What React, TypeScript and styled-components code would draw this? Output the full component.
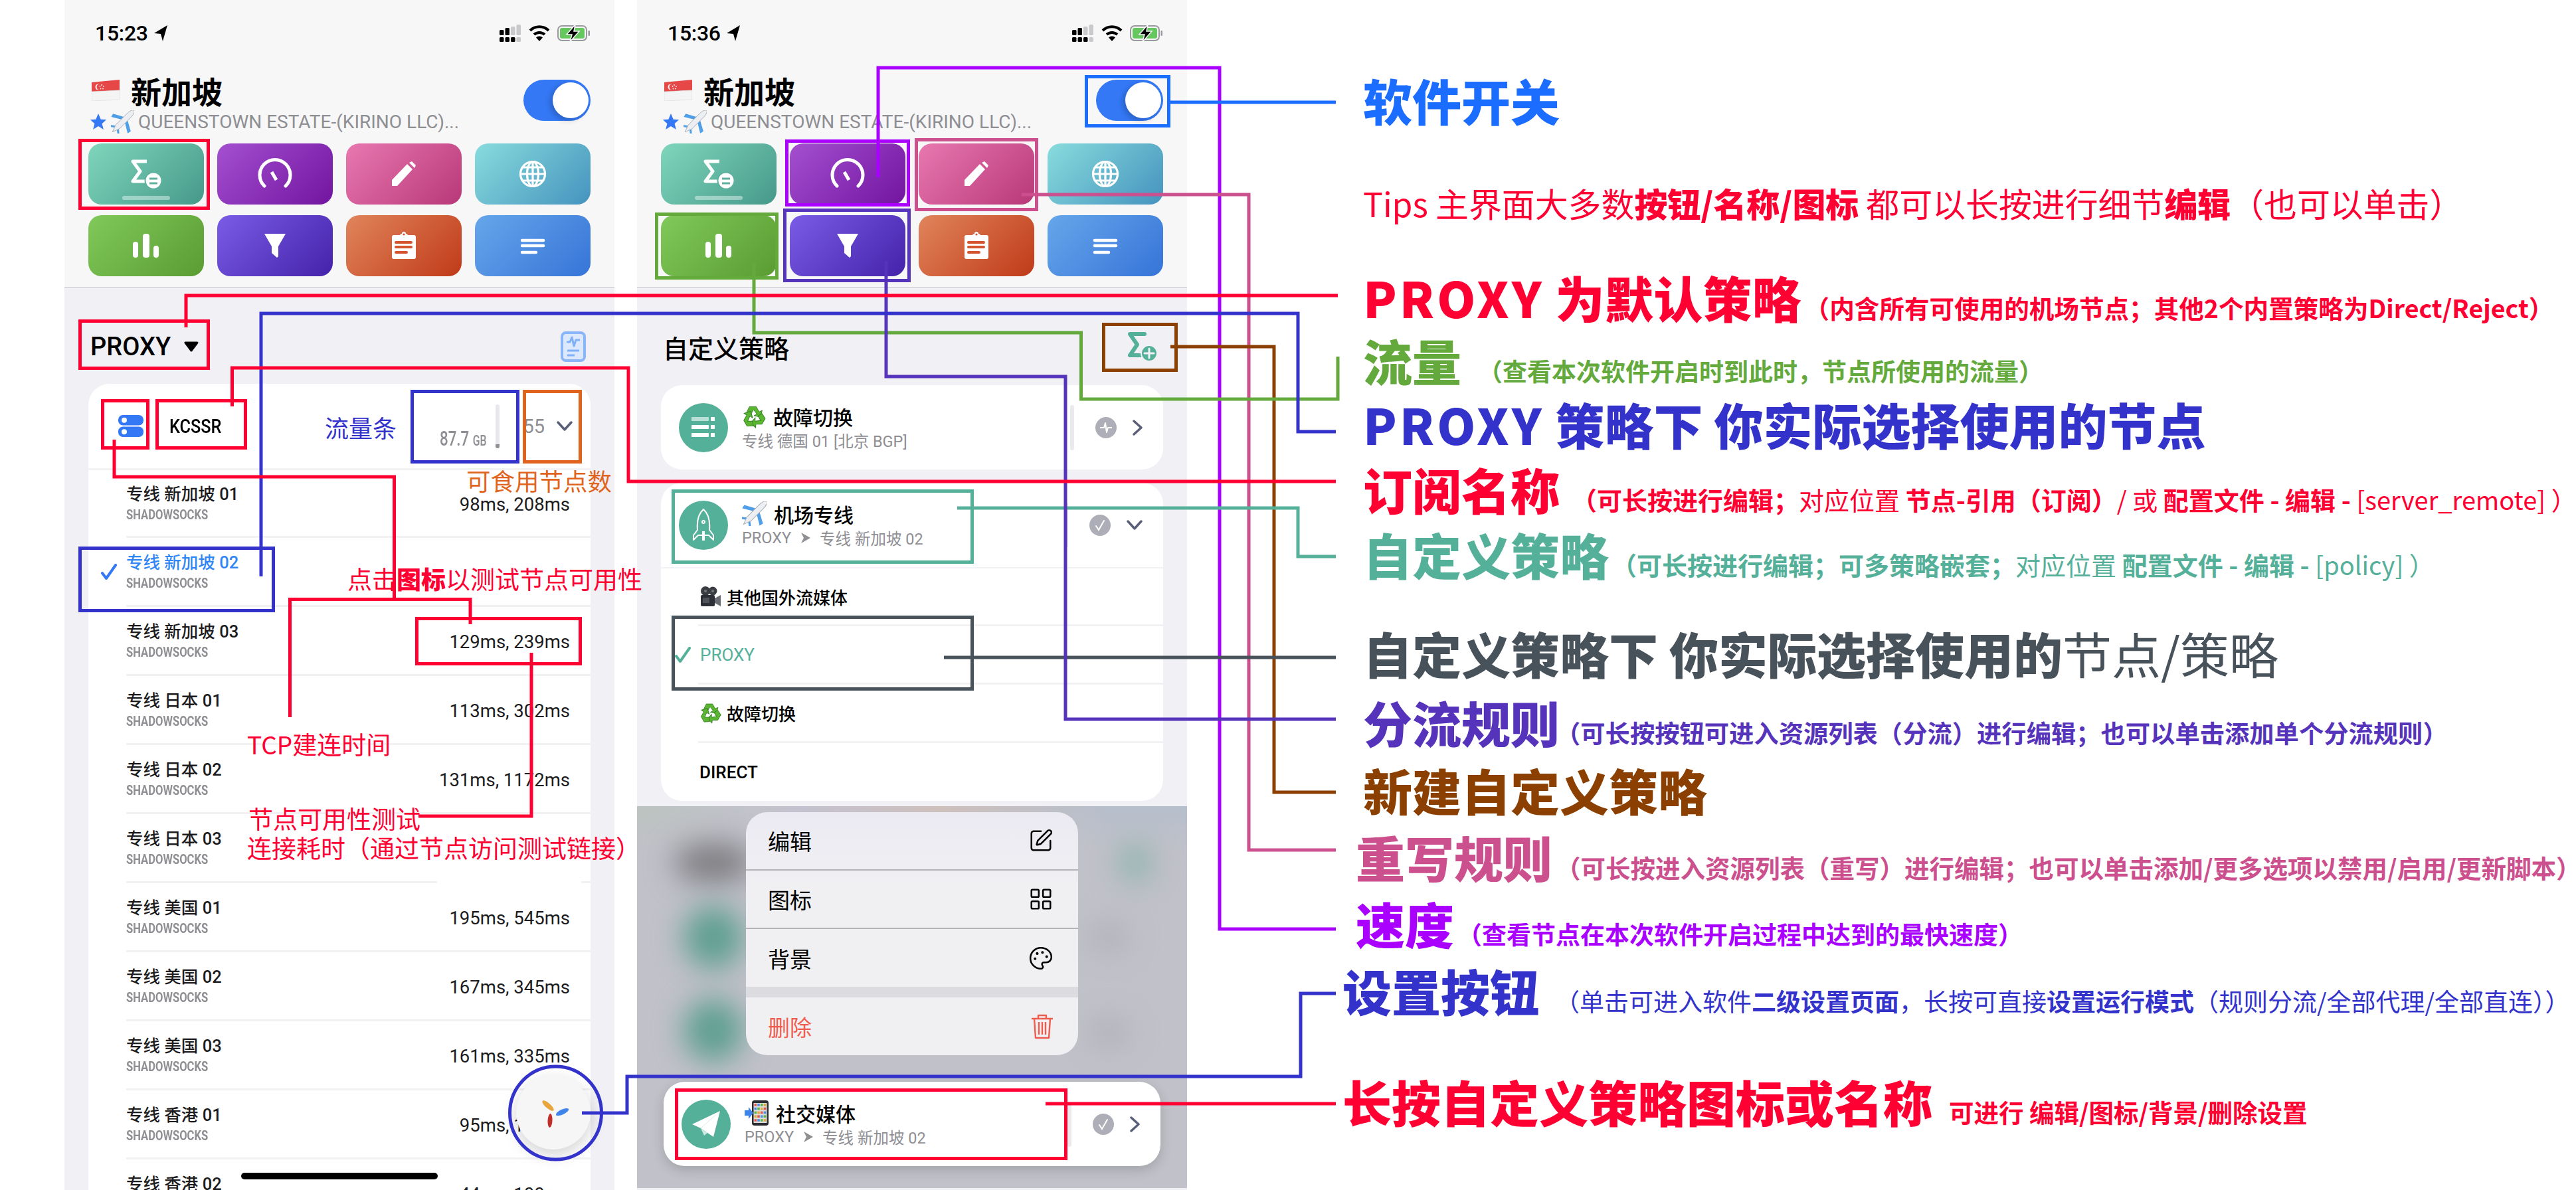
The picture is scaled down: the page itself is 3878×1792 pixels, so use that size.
import React from "react";
import styled, { createGlobalStyle } from "styled-components";
import { SquarePen, LayoutGrid, Palette } from "lucide-react";

const UI = `Roboto, "Noto Sans CJK SC", sans-serif`;
const NOTE = `"Noto Sans CJK SC", sans-serif`;
const TEAL = "#55b09a";

const Global = createGlobalStyle`
  html, body { margin: 0; padding: 0; background: #fff; }
  * { box-sizing: border-box; }
`;

const Canvas = styled.div`
  position: relative; width: 3878px; height: 1792px; overflow: hidden; background: #fff;
  display: flex; padding-left: 97px; gap: 34px; font-family: ${UI};
`;
const Phone = styled.div`
  position: relative; width: 828px; height: 1792px; flex: none; overflow: hidden;
  background: #f1f1f5; display: flex; flex-direction: column;
`;
const Header = styled.div`
  height: 433px; flex: none; background: #f7f7f8; border-bottom: 1px solid #c8c8cc;
  display: flex; flex-direction: column;
`;
const StatusBar = styled.div`
  height: 36px; margin-top: 32px; padding: 0 36px 0 46px; display: flex; align-items: center; justify-content: space-between;
`;
const Time = styled.div`
  display: flex; align-items: center; gap: 8px; font-size: 32px; font-weight: 500; color: #000; letter-spacing: -.3px;
`;
const StatusIcons = styled.div`display: flex; align-items: center; gap: 11px;`;
const TitleRow = styled.div`
  height: 96px; margin-top: 52px; padding: 0 36px 0 41px; display: flex; justify-content: space-between; flex: none;
`;
const TitleBlock = styled.div`display: flex; flex-direction: column;`;
const Title = styled.div`
  display: flex; align-items: center; gap: 17px; height: 32px; font-size: 46px; font-weight: 700; color: #000;
  font-family: ${NOTE}; line-height: 32px;
`;
const Subtitle = styled.div`
  display: flex; align-items: center; height: 30px; margin: 16px 0 0 -3px; font-size: 28px; color: #8e8e93; gap: 6px;
`;
const Toggle = styled.div`
  width: 101px; height: 62px; border-radius: 31px; background: #3478f6; padding: 4px 3px; display: flex; justify-content: flex-end;
`;
const Knob = styled.div`width: 54px; height: 54px; border-radius: 50%; background: #fff; box-shadow: -4px 3px 8px rgba(0,0,0,.2);`;
const TileGrid = styled.div`
  display: grid; grid-template-columns: repeat(4, 174px); grid-auto-rows: 92px; gap: 16px 20px; padding: 0 36px;
`;
const Tile = styled.div<{ $from: string; $to: string }>`
  border-radius: 20px; background: linear-gradient(135deg, ${p => p.$from}, ${p => p.$to});
  svg { display: block; width: 174px; height: 92px; }
`;
const SectionRow = styled.div<{ $h: number }>`
  height: ${p => p.$h}px; flex: none; padding: 32px 43px 0 39px; display: flex; align-items: center; justify-content: space-between;
`;
const ProxyName = styled.div`
  display: flex; align-items: center; gap: 20px; font-size: 38px; font-weight: 500; color: #000;
`;
const SectionTitle = styled.div`font-family: ${NOTE}; font-size: 38px; font-weight: 500; color: #000;`;

const NodeCard = styled.div`
  margin: 0 36px; background: #fff; border-radius: 32px 32px 0 0; flex: 1; display: flex; flex-direction: column;
`;
const NodeHead = styled.div`
  height: 130px; flex: none; padding: 0 27px 0 45px; border-bottom: 3px solid #f2f2f5; display: flex; align-items: center;
`;
const GroupName = styled.div`
  margin-left: 39px; font-size: 29px; font-weight: 500; color: #000; transform: scaleX(.87); transform-origin: left center;
`;
const Traffic = styled.div`margin-left: auto; display: flex; align-items: flex-end; gap: 16px; height: 66px;`;
const TrafficText = styled.div`
  color: #8e8e93; font-weight: 500; font-size: 31px; line-height: 23px; width: 68px; white-space: nowrap;
  transform: scaleX(.72); transform-origin: left bottom; small { font-size: 22px; }
`;
const TrafficBar = styled.div`
  width: 6px; height: 66px; border-radius: 3px; background: #e8e8ec; display: flex; align-items: flex-end; overflow: hidden;
  &::after { content: ""; width: 6px; height: 6px; background: #8e8e93; }
`;
const NodeCount = styled.div`margin: 0 18px 0 35px; font-size: 29px; color: #8e8e93;`;
const NodeRow = styled.div<{ $h: number }>`
  height: ${p => p.$h}px; flex: none; margin-left: 57px; padding-right: 31px; border-bottom: 3px solid #f2f2f5;
  display: flex; align-items: center;
`;
const CheckSlot = styled.div`width: 24px; height: 24px; margin: 0 14px 0 -38px; flex: none;`;
const NodeText = styled.div`display: flex; flex-direction: column; padding-top: 6px;`;
const NodeName = styled.div<{ $on?: boolean }>`
  font-size: 25.5px; line-height: 30px; font-weight: 500; color: ${p => (p.$on ? "#2f86f6" : "#1c1c1e")}; white-space: nowrap;
`;
const NodeProto = styled.div`
  font-size: 21px; line-height: 33px; font-weight: 700; color: #8e8e93; transform: scaleX(.79); transform-origin: left center;
`;
const Latency = styled.div`margin-left: auto; font-size: 27.5px; color: #1c1c1e; white-space: nowrap; padding-top: 3px;`;
const Fab = styled.div`
  position: absolute; left: 680px; top: 1619px; width: 112px; height: 112px; border-radius: 50%; background: #f6f6f7;
  box-shadow: 0 8px 24px rgba(0,0,0,.18);
`;
const HomeBar = styled.div`
  position: absolute; left: 266px; top: 1766px; width: 296px; height: 10px; border-radius: 5px; background: #000;
`;

const PolicyCard = styled.div<{ $h: number; $mb: number }>`
  margin: 0 36px ${p => p.$mb}px; height: ${p => p.$h}px; flex: none; background: #fff; border-radius: 32px;
  display: flex; flex-direction: column;
`;
const PolicyHead = styled.div`
  height: 127px; flex: none; padding: 0 31px 0 27px; display: flex; align-items: center; gap: 21px;
`;
const Disc = styled.div`
  width: 74px; height: 74px; border-radius: 50%; background: ${TEAL}; flex: none; display: flex; align-items: center; justify-content: center;
`;
const PolicyText = styled.div`display: flex; flex-direction: column;`;
const PolicyTitle = styled.div`
  display: flex; align-items: center; gap: 11px; height: 38px; font-size: 30px; font-weight: 500; color: #000; font-family: ${NOTE};
`;
const PolicySub = styled.div`
  display: flex; align-items: center; gap: 14px; height: 34px; font-size: 23.5px; color: #8e8e93; white-space: nowrap;
`;
const PolicyTail = styled.div`margin-left: auto; display: flex; align-items: center;`;
const Grip = styled.div`width: 6px; height: 68px; border-radius: 3px; background: #e9e9ee; margin-right: 32px;`;
const StateDot = styled.div`
  width: 32px; height: 32px; border-radius: 50%; background: #aeaeb8; margin-right: 24px; display: flex; align-items: center; justify-content: center;
`;
const HeadRule = styled.div`height: 2px; background: #f2f2f5; flex: none;`;
const OptionRow = styled.div<{ $h: number; $last?: boolean }>`
  height: ${p => p.$h}px; flex: none; margin-left: 56px; padding-left: 2px; display: flex; align-items: center; gap: 8px;
  border-bottom: ${p => (p.$last ? "none" : "3px solid #f2f2f5")};
`;
const OptionCheck = styled.div`width: 24px; height: 24px; margin-left: -37px; margin-right: 6px; flex: none;`;
const OptionText = styled.div<{ $on?: boolean }>`
  font-size: 26px; font-weight: ${p => (p.$on ? 400 : 500)}; color: ${p => (p.$on ? TEAL : "#000")};
`;

const Blurred = styled.div`
  position: relative; height: 575px; flex: none; overflow: hidden; padding-top: 9px; display: flex; flex-direction: column; align-items: center;
  background:
    linear-gradient(180deg, rgba(193,193,201,0), #c1c1c9 70px),
    linear-gradient(90deg, #bcc3bf, #c4c2d0 30%, #cfc0bb 55%, #b6bfcc 85%);
`;
const Blob = styled.div<{ $x: number; $y: number; $w: number; $h: number; $c: string }>`
  position: absolute; left: ${p => p.$x}px; top: ${p => p.$y}px; width: ${p => p.$w}px; height: ${p => p.$h}px;
  border-radius: 50%; background: ${p => p.$c}; filter: blur(22px);
`;
const Menu = styled.div`
  position: relative; width: 500px; height: 366px; border-radius: 32px; overflow: hidden; flex: none;
  background: linear-gradient(180deg, #ebeaf2, #f0f0f3 30%);
`;
const MenuItem = styled.div<{ $danger?: boolean; $rule?: boolean }>`
  height: ${p => (p.$rule ? 88 : 87)}px; padding: 0 37px 0 33px; display: flex; align-items: center; justify-content: space-between;
  font-family: ${NOTE}; font-size: 33px; color: ${p => (p.$danger ? "#ef5b4c" : "#000")};
  border-bottom: ${p => (p.$rule ? "2px solid #b3b3b8" : "none")};
`;
const MenuBand = styled.div`height: 16px; background: #dcdce0;`;
const FocusCard = styled.div`
  position: relative; width: 748px; height: 127px; margin-top: 40px; flex: none; border-radius: 32px; background: #fff;
  box-shadow: 0 6px 18px rgba(0,0,0,.16);
`;

const Legend = styled.div`
  margin-left: 200px; padding-top: 110px; display: flex; flex-direction: column; font-family: ${NOTE}; flex: none;
`;
const LegendRow = styled.div<{ $gap: number; $pad: number; $c: string }>`
  height: 80px; flex: none; margin-top: ${p => p.$gap}px; padding-left: ${p => p.$pad}px; color: ${p => p.$c};
  display: flex; align-items: center; white-space: nowrap;
`;
const LegendLine = styled.div`line-height: 1;`;
const Big = styled.span<{ $light?: boolean }>`
  font-size: 74px; font-weight: ${p => (p.$light ? 400 : 900)};
  em { font-style: normal; letter-spacing: 4px; }
`;
const Small = styled.span<{ $ml?: number; $size?: number }>`
  font-size: ${p => p.$size ?? 38}px; font-weight: 700; margin-left: ${p => p.$ml ?? 0}px;
  i { font-style: normal; font-weight: 400; }
`;
const TipText = styled.span`
  font-size: 49.9px; font-weight: 400; b { font-weight: 800; }
`;
const Overlay = styled.svg`position: absolute; left: 0; top: 0; width: 3878px; height: 1792px; pointer-events: none;`;
const Note = styled.div<{ $x: number; $y: number; $c: string; $size?: number }>`
  position: absolute; left: ${p => p.$x}px; top: ${p => p.$y}px; transform: translateY(-50%);
  font-family: ${NOTE}; font-size: ${p => p.$size ?? 37}px; line-height: 1; color: ${p => p.$c}; white-space: nowrap;
  b { font-weight: 900; }
`;

/* ---------- drawn icons ---------- */
const LocationArrow = () => (
  <svg width="22" height="26" viewBox="0 0 22 26"><path d="M21 1 L1 13 L11 14 L14 25 Z" fill="#000" /></svg>
);
const Signal = () => (
  <svg width="33" height="26" viewBox="0 0 33 26">
    <rect x="0" y="8" width="6.5" height="8" rx="1.5" fill="#000" />
    <rect x="8.5" y="5" width="6.5" height="11" rx="1.5" fill="#000" />
    <rect x="17" y="3" width="6.5" height="13" rx="1.5" fill="#c9c9cc" />
    <rect x="25.5" y="0" width="6.5" height="16" rx="1.5" fill="#c9c9cc" />
    <rect x="0" y="19" width="6.5" height="7" rx="1.5" fill="#000" />
    <rect x="8.5" y="19" width="6.5" height="7" rx="1.5" fill="#000" />
    <rect x="17" y="19" width="6.5" height="7" rx="1.5" fill="#000" />
    <rect x="25.5" y="19" width="6.5" height="7" rx="1.5" fill="#c9c9cc" />
  </svg>
);
const Wifi = () => (
  <svg width="32" height="24" viewBox="0 0 32 24" fill="none" stroke="#000" strokeWidth="4">
    <path d="M2 8 A20 20 0 0 1 30 8" />
    <path d="M8 14 A12 12 0 0 1 24 14" />
    <path d="M16 24 L11 18.5 A7 7 0 0 1 21 18.5 Z" fill="#000" stroke="none" />
  </svg>
);
const Battery = () => (
  <svg width="50" height="26" viewBox="0 0 50 26">
    <rect x="1" y="2" width="43" height="22" rx="6" fill="none" stroke="#9a9a9e" strokeWidth="2" />
    <rect x="4" y="5" width="37" height="16" rx="3" fill="#66c75f" />
    <rect x="46.5" y="9" width="2.5" height="8" rx="1.2" fill="#9a9a9e" />
    <path d="M27 0 L14 15 H22 L19 26 L33 10 H25 Z" fill="#000" stroke="#f7f7f8" strokeWidth="1.5" />
  </svg>
);
const Flag = () => (
  <svg width="42" height="32" viewBox="0 0 42 32">
    <path d="M0 4 Q21 2 42 0 V16 Q21 17 0 18 Z" fill="#e64848" />
    <path d="M0 18 Q21 17 42 16 V30 Q21 31 0 32 Z" fill="#f4f4f4" stroke="#d8d8d8" strokeWidth=".6" />
    <circle cx="10" cy="11" r="4.5" fill="#f7f0f0" />
    <circle cx="12" cy="11" r="4.5" fill="#e64848" />
    <g fill="#f7f0f0"><circle cx="15" cy="8" r=".9" /><circle cx="18" cy="10" r=".9" /><circle cx="17" cy="13.5" r=".9" /><circle cx="13.5" cy="13.5" r=".9" /><circle cx="12.5" cy="10" r=".9" /></g>
  </svg>
);
const Star = () => (
  <svg width="26" height="26" viewBox="0 0 28 28"><path d="M14 1 L18 10.5 L27 11 L20 17.5 L22.5 27 L14 21.5 L5.5 27 L8 17.5 L1 11 L10 10.5 Z" fill="#3478f6" /></svg>
);
const Plane = ({ size = 35 }: { size?: number }) => (
  <svg width={size} height={size} viewBox="3 3 26 26">
    <g transform="rotate(45 16 16)">
      <path d="M2 17 L13 11 V15 L3 21 Z M30 17 L19 11 V15 L29 21 Z" fill="#4f9fe8" />
      <path d="M9 28 L14 24 V27 L10 30 Z M23 28 L18 24 V27 L22 30 Z" fill="#4f9fe8" />
      <path d="M16 -2 C18 -2 19 2 19 6 V24 L16 32 L13 24 V6 C13 2 14 -2 16 -2 Z" fill="#eceef2" stroke="#a8adb5" strokeWidth=".7" />
    </g>
  </svg>
);
const RecycleArm = ({ r }: { r: number }) => (
  <g transform={`rotate(${r} 16 17)`}>
    <path d="M10 3 L19 3 L23 10 L27 8 L25 17 L16 15 L20 13 L15.5 7 L12 13 L6.5 10 Z" fill="#5cb531" stroke="#2f7f20" strokeWidth=".8" />
  </g>
);
const Recycle = ({ size = 36 }: { size?: number }) => (
  <svg width={size} height={size} viewBox="0 0 32 32"><RecycleArm r={0} /><RecycleArm r={120} /><RecycleArm r={240} /></svg>
);
const MovieCamera = () => (
  <svg width="33" height="33" viewBox="0 0 33 33">
    <circle cx="9" cy="8" r="7" fill="#3a3d42" /><circle cx="20" cy="8" r="6.5" fill="#3a3d42" />
    <circle cx="9" cy="8" r="2" fill="#777" /><circle cx="20" cy="8" r="2" fill="#777" />
    <rect x="2" y="14" width="21" height="17" rx="2" fill="#2c2f33" />
    <path d="M23 19 L32 14 V31 L23 26 Z" fill="#686c72" />
    <rect x="5" y="18" width="10" height="8" rx="1" fill="#50545a" />
  </svg>
);
const PhoneArrow = () => (
  <svg width="36" height="38" viewBox="0 0 36 38">
    <rect x="11" y="0" width="25" height="38" rx="4" fill="#2b2d31" />
    <rect x="13.5" y="4" width="20" height="30" fill="#ddd" />
    {[0, 1, 2, 3].map(c => [0, 1, 2, 3, 4].map(r => (
      <rect key={`${c}${r}`} x={14.5 + c * 4.7} y={5 + r * 5.8} width="3.6" height="3.6" fill={["#e7584c", "#4a8fe0", "#5bb54a", "#e0a93c"][(c + r) % 4]} />
    )))}
    <path d="M0 15 H6 V10 L13 19 L6 28 V23 H0 Z" fill="#3f84ea" />
  </svg>
);
const Tri = () => (
  <svg width="15" height="16" viewBox="0 0 15 16"><path d="M1 0 L15 8 L1 16 L5 8 Z" fill="#8e8e93" /></svg>
);
const ChevronRight = () => (
  <svg width="15" height="24" viewBox="0 0 15 24" fill="none" stroke="#5a5f78" strokeWidth="3.5" strokeLinecap="round" strokeLinejoin="round"><path d="M2 2 L13 12 L2 22" /></svg>
);
const ChevronDown = () => (
  <svg width="24" height="15" viewBox="0 0 24 15" fill="none" stroke="#5a5f78" strokeWidth="3.5" strokeLinecap="round" strokeLinejoin="round"><path d="M2 2 L12 13 L22 2" /></svg>
);
const Check = ({ c }: { c: string }) => (
  <svg width="24" height="24" viewBox="0 0 24 24" fill="none" stroke={c} strokeWidth="4" strokeLinecap="round" strokeLinejoin="round"><path d="M2 14 L8 22 L22 2" /></svg>
);
const DotCheck = () => (
  <svg width="18" height="18" viewBox="0 0 18 18" fill="none" stroke="#fff" strokeWidth="2" strokeLinecap="round"><path d="M3 10 L7 16 L15 2" /></svg>
);
const DotPulse = () => (
  <svg width="20" height="20" viewBox="0 0 20 20" fill="none" stroke="#fff" strokeWidth="2" strokeLinejoin="round"><path d="M1 10 H7 L9 3 L11 17 L13 10 H19" /></svg>
);
const Sigma = ({ c, badge }: { c: string; badge: string }) => (
  <svg width="48" height="46" viewBox="0 0 48 46" fill="none">
    <path d="M27 3 H5 L16 19 L5 35 H27" stroke={c} strokeWidth="6" strokeLinejoin="round" strokeLinecap="round" />
    <circle cx="34" cy="32" r="12" fill={c} stroke={badge} strokeWidth="2" />
    <path d="M34 25 V39 M27 32 H41" stroke={badge} strokeWidth="3" strokeLinecap="round" />
  </svg>
);
const TileSvg = ({ children }: { children: React.ReactNode }) => <svg viewBox="0 0 174 92">{children}</svg>;

const TileIcons = [
  <TileSvg key="0">
    <path d="M88 27 H67 L78 42 L67 57 H88" fill="none" stroke="#fff" strokeWidth="5" strokeLinejoin="round" />
    <circle cx="98" cy="56" r="12.5" fill="#fff" stroke="#5fb09e" strokeWidth="2" />
    <path d="M92 53 H104 M92 60 H104" stroke="#5fb09e" strokeWidth="3" />
    <rect x="51" y="79" width="72" height="6" rx="3" fill="#fff" opacity=".42" />
  </TileSvg>,
  <TileSvg key="1">
    <path d="M71 64 A23 23 0 1 1 103 64" fill="none" stroke="#fff" strokeWidth="5" strokeLinecap="round" />
    <path d="M82 43 L89 55" stroke="#fff" strokeWidth="5" />
  </TileSvg>,
  <TileSvg key="2">
    <path d="M69 64 V55 L92 31 L100 39 L77 64 Z" fill="#fff" />
    <path d="M95 29 L99 27 L105 33 L103 37 Z" fill="#fff" />
  </TileSvg>,
  <TileSvg key="3">
    <g fill="none" stroke="#fff" strokeWidth="3.2">
      <circle cx="87" cy="46" r="18.5" />
      <ellipse cx="87" cy="46" rx="8.5" ry="18.5" />
      <path d="M87 27 V65 M69 46 H105 M72 36 H102 M72 56 H102" />
    </g>
  </TileSvg>,
  <TileSvg key="4">
    <rect x="67" y="40" width="8" height="24" rx="4" fill="#fff" />
    <rect x="82" y="28" width="10" height="36" rx="4" fill="#fff" />
    <rect x="98" y="46" width="8" height="18" rx="4" fill="#fff" />
  </TileSvg>,
  <TileSvg key="5">
    <path d="M71 28 H103 L92 47 V62 L90 64 L82 57 V47 Z" fill="#fff" />
  </TileSvg>,
  <TileSvg key="6">
    <rect x="69" y="30" width="36" height="36" rx="3" fill="#fff" />
    <path d="M81 31 Q81 28 84 28 Q84 25 87 25 Q90 25 90 28 Q93 28 93 31 V35 H81 Z" fill="#fff" />
    <circle cx="87" cy="29" r="1.6" fill="#d4552d" />
    <path d="M75 41 H98 M75 48 H98 M75 56 H91" stroke="#d4552d" strokeWidth="4" strokeLinecap="round" />
  </TileSvg>,
  <TileSvg key="7">
    <path d="M71 38 H103 M71 46 H103 M71 56 H92" stroke="#fff" strokeWidth="4.5" strokeLinecap="round" />
  </TileSvg>,
];

const tiles = [
  ["#7fd6bb", "#46998a"], ["#a44fd0", "#7215a0"], ["#e878b0", "#b83878"], ["#88dcdc", "#4593bf"],
  ["#80c95a", "#5a9c32"], ["#7a5ce6", "#4522aa"], ["#e0855c", "#c03a18"], ["#66a6ea", "#3674d8"],
];

const PhoneHeader = ({ time }: { time: string }) => (
  <Header>
    <StatusBar>
      <Time>{time}<LocationArrow /></Time>
      <StatusIcons><Signal /><Wifi /><Battery /></StatusIcons>
    </StatusBar>
    <TitleRow>
      <TitleBlock>
        <Title><Flag />新加坡</Title>
        <Subtitle><Star /><Plane />QUEENSTOWN ESTATE-(KIRINO LLC)...</Subtitle>
      </TitleBlock>
      <Toggle><Knob /></Toggle>
    </TitleRow>
    <TileGrid>
      {tiles.map(([a, b], i) => <Tile key={i} $from={a} $to={b}>{TileIcons[i]}</Tile>)}
    </TileGrid>
  </Header>
);

const nodes: [string, string, boolean?][] = [
  ["专线 新加坡 01", "98ms, 208ms"], ["专线 新加坡 02", "", true], ["专线 新加坡 03", "129ms, 239ms"],
  ["专线 日本 01", "113ms, 302ms"], ["专线 日本 02", "131ms, 1172ms"], ["专线 日本 03", ""],
  ["专线 美国 01", "195ms, 545ms"], ["专线 美国 02", "167ms, 345ms"], ["专线 美国 03", "161ms, 335ms"],
  ["专线 香港 01", "95ms, 196ms"], ["专线 香港 02", "44ms, 100ms"],
];

const Sub = () => (
  <PolicySub>PROXY<Tri />专线 新加坡 02</PolicySub>
);

/* ---------- callouts ---------- */
const R = "#ff0033", B = "#3333cc", T = "#1a6dff", O = "#e0641e", G = "#63a93c", V = "#5533bb",
  P = "#cc4f8e", M = "#aa00ff", N = "#8b3f00", E = "#55b09a", S = "#48525a";

const lines: [string, string][] = [
  [M, "1322,267 1322,102 1836,102 1836,1399 2011,1399"],
  [P, "1538,293 1880,293 1880,1280 2011,1280"],
  [N, "1762,522 1918,522 1918,1193 2011,1193"],
  [E, "1441,765 1954,765 1954,838 2011,838"],
  [S, "1421,990 2011,990"],
  [G, "1135,395 1135,501 1627.5,501 1627.5,601 2014,601 2014,537"],
  [V, "1334,393 1334,567 1604,567 1604,1083 2011,1083"],
  [B, "393,868 393,472 1954,472 1954,650 2011,650"],
  [R, "280,493 280,445 2014,445"],
  [R, "349.5,612 349.5,554 946,554 946,725 2011,725"],
  [R, "172,662 172,718 593.5,718 593.5,902.5"],
  [R, "436.5,1080 436.5,902.5 708,902.5 708,940"],
  [R, "800,983 800,1229 630,1229"],
  [T, "1762,154 2011,154"],
  [B, "876,1676 944,1676 944,1621 1958,1621 1958,1496 2011,1496"],
  [R, "1574,1662 2011,1662"],
];
const boxes: [string, number, number, number, number][] = [
  [R, 118, 209, 316, 316], [R, 118, 481, 316, 557], [R, 152, 601, 225, 677], [R, 234, 601, 372, 677],
  [R, 625, 929, 876, 1002], [R, 1016, 1639, 1607, 1747],
  [B, 618, 587, 782, 698], [B, 118, 823, 414, 922], [O, 787, 587, 876, 698],
  [T, 1633, 113, 1762, 192], [M, 1182, 210, 1370, 311], [P, 1377, 208, 1563, 318],
  [G, 986, 320, 1172, 421], [V, 1179, 314, 1371, 425], [N, 1659, 486, 1773, 560],
  [E, 1011, 737, 1466, 849], [S, 1011, 927, 1466, 1040],
];

export default function App() {
  return (
    <Canvas>
      <Global />
      <Phone>
        <PhoneHeader time="15:23" />
        <SectionRow $h={145}>
          <ProxyName>PROXY
            <svg width="22" height="16" viewBox="0 0 22 16"><path d="M2 2 H20 L11 14 Z" fill="#000" stroke="#000" strokeWidth="3" strokeLinejoin="round" /></svg>
          </ProxyName>
          <svg width="38" height="46" viewBox="0 0 38 46" fill="none">
            <rect x="2" y="2" width="34" height="42" rx="6" fill="#dce8fd" stroke="#8ab6f8" strokeWidth="4" />
            <path d="M9 16 H14 L17 9 L20 22 L23 13 H29 M10 29 H28 M10 36 H21" stroke="#7fb0f8" strokeWidth="3" strokeLinejoin="round" />
          </svg>
        </SectionRow>
        <NodeCard>
          <NodeHead>
            <svg width="38" height="33" viewBox="0 0 38 33">
              <rect y="0" width="38" height="15.5" rx="7" fill="#3478f6" />
              <rect y="17.5" width="38" height="15.5" rx="7" fill="#3478f6" />
              <circle cx="9" cy="7.7" r="4" fill="#fff" /><circle cx="9" cy="25.2" r="4" fill="#fff" />
            </svg>
            <GroupName>KCSSR</GroupName>
            <Traffic>
              <TrafficText>87.7 <small>GB</small></TrafficText>
              <TrafficBar />
            </Traffic>
            <NodeCount>55</NodeCount>
            <ChevronDown />
          </NodeHead>
          {nodes.map(([name, ms, on], i) => (
            <NodeRow key={name} $h={i === 0 ? 102 : 104}>
              {on && <CheckSlot><Check c="#3478f6" /></CheckSlot>}
              <NodeText>
                <NodeName $on={on}>{name}</NodeName>
                <NodeProto>SHADOWSOCKS</NodeProto>
              </NodeText>
              {ms && <Latency>{ms}</Latency>}
            </NodeRow>
          ))}
        </NodeCard>
        <Fab>
          <svg width="112" height="112" viewBox="0 0 112 112">
            <ellipse cx="48" cy="46" rx="3.8" ry="11" transform="rotate(-49 48 46)" fill="#e8a53c" />
            <ellipse cx="69.5" cy="55.5" rx="3.8" ry="10.5" transform="rotate(65 69.5 55.5)" fill="#3f84ea" />
            <ellipse cx="51" cy="68.5" rx="3.5" ry="10.5" transform="rotate(3 51 68.5)" fill="#c22f2a" />
          </svg>
        </Fab>
        <HomeBar />
      </Phone>

      <Phone>
        <PhoneHeader time="15:36" />
        <SectionRow $h={147}>
          <SectionTitle>自定义策略</SectionTitle>
          <Sigma c={TEAL} badge="#f1f1f5" />
        </SectionRow>
        <PolicyCard $h={127} $mb={20}>
          <PolicyHead>
            <Disc>
              <svg width="36" height="32" viewBox="0 0 36 32" fill="#fff">
                <rect x="0" y="0" width="26" height="6" rx="1" opacity=".6" /><rect x="29" y="0" width="6" height="6" rx="1" />
                <rect x="0" y="12" width="26" height="6" rx="1" /><rect x="29" y="12" width="6" height="6" rx="1" />
                <rect x="0" y="24" width="26" height="6" rx="1" /><rect x="29" y="24" width="6" height="6" rx="1" />
              </svg>
            </Disc>
            <PolicyText>
              <PolicyTitle><Recycle />故障切换</PolicyTitle>
              <PolicySub>专线 德国 01 [北京 BGP]</PolicySub>
            </PolicyText>
            <PolicyTail><Grip /><StateDot><DotPulse /></StateDot><ChevronRight /></PolicyTail>
          </PolicyHead>
        </PolicyCard>
        <PolicyCard $h={479} $mb={8}>
          <PolicyHead>
            <Disc>
              <svg width="36" height="50" viewBox="0 0 36 50" fill="none" stroke="#fff" strokeWidth="2" strokeLinejoin="round">
                <path d="M18 1 C26 8 28 20 27 32 L33 40 L33 47 L26 40 H10 L3 47 L3 40 L9 32 C8 20 10 8 18 1 Z" />
                <circle cx="18" cy="20" r="2" /><path d="M18 34 V48" strokeWidth="4" />
              </svg>
            </Disc>
            <PolicyText>
              <PolicyTitle><Plane size={37} />机场专线</PolicyTitle>
              <Sub />
            </PolicyText>
            <PolicyTail><Grip /><StateDot><DotCheck /></StateDot><ChevronDown /></PolicyTail>
          </PolicyHead>
          <HeadRule />
          <OptionRow $h={87}><MovieCamera /><OptionText>其他国外流媒体</OptionText></OptionRow>
          <OptionRow $h={88}><OptionCheck><Check c={TEAL} /></OptionCheck><OptionText $on>PROXY</OptionText></OptionRow>
          <OptionRow $h={88}><Recycle size={33} /><OptionText>故障切换</OptionText></OptionRow>
          <OptionRow $h={87} $last><OptionText>DIRECT</OptionText></OptionRow>
        </PolicyCard>
        <Blurred>
          <Blob $x={55} $y={55} $w={120} $h={60} $c="#7c7c80" />
          <Blob $x={70} $y={150} $w={90} $h={95} $c="#5f9f90" />
          <Blob $x={70} $y={290} $w={90} $h={95} $c="#5f9f90" />
          <Blob $x={725} $y={55} $w={50} $h={60} $c="#8eb4ad" />
          <Blob $x={680} $y={175} $w={60} $h={45} $c="#b0b0b6" />
          <Blob $x={680} $y={318} $w={60} $h={45} $c="#b0b0b6" />
          <Menu>
            <MenuItem $rule>编辑<SquarePen size={38} strokeWidth={1.6} color="#000" /></MenuItem>
            <MenuItem $rule>图标<LayoutGrid size={38} strokeWidth={1.6} color="#000" /></MenuItem>
            <MenuItem>背景<Palette size={38} strokeWidth={1.6} color="#000" /></MenuItem>
            <MenuBand />
            <MenuItem $danger>删除
              <svg width="34" height="38" viewBox="0 0 34 38" fill="none" stroke="#ef5b4c" strokeWidth="2.4" strokeLinejoin="round">
                <path d="M1 7 H33 M11 7 V2 H23 V7 M5 7 L7 36 H27 L29 7 M12 12 V31 M17 12 V31 M22 12 V31" />
              </svg>
            </MenuItem>
          </Menu>
          <FocusCard>
            <PolicyHead>
              <Disc>
                <svg width="44" height="42" viewBox="0 0 44 42">
                  <path d="M43 1 L1 21 L14 27 Z" fill="#fff" />
                  <path d="M43 1 L14 27 L33 40 Z" fill="#fff" />
                  <path d="M14 27 L19 38 L24 34 Z" fill="#cfe8e2" />
                </svg>
              </Disc>
              <PolicyText>
                <PolicyTitle><PhoneArrow />社交媒体</PolicyTitle>
                <Sub />
              </PolicyText>
              <PolicyTail><Grip /><StateDot><DotCheck /></StateDot><ChevronRight /></PolicyTail>
            </PolicyHead>
          </FocusCard>
        </Blurred>
      </Phone>

      <Legend>
        <LegendRow $gap={0} $pad={31} $c={T}><LegendLine><Big>软件开关</Big></LegendLine></LegendRow>
        <LegendRow $gap={76} $pad={31} $c={R}><LegendLine><TipText>Tips 主界面大多数<b>按钮/名称/图标</b> 都可以长按进行细节<b>编辑</b>（也可以单击）</TipText></LegendLine></LegendRow>
        <LegendRow $gap={61} $pad={31} $c={R}><LegendLine><Big><em>PROXY</em> 为默认策略</Big><Small $ml={5} $size={37.6}>（内含所有可使用的机场节点；其他2个内置策略为Direct/Reject）</Small></LegendLine></LegendRow>
        <LegendRow $gap={15} $pad={31} $c={G}><LegendLine><Big>流量</Big><Small $ml={25} $size={37}>（查看本次软件开启时到此时，节点所使用的流量）</Small></LegendLine></LegendRow>
        <LegendRow $gap={16} $pad={31} $c={B}><LegendLine><Big><em>PROXY</em> 策略下 你实际选择使用的节点</Big></LegendLine></LegendRow>
        <LegendRow $gap={18} $pad={31} $c={R}><LegendLine><Big>订阅名称</Big><Small $ml={18} $size={38}>（可长按进行编辑；<i>对应位置</i> 节点-引用（订阅）<i>/ 或</i> 配置文件 - 编辑 - <i>[server_remote] ）</i></Small></LegendLine></LegendRow>
        <LegendRow $gap={18} $pad={31} $c={E}><LegendLine><Big>自定义策略</Big><Small $ml={4}>（可长按进行编辑；可多策略嵌套；<i>对应位置</i> 配置文件 - 编辑 - <i>[policy] ）</i></Small></LegendLine></LegendRow>
        <LegendRow $gap={69} $pad={31} $c={S}><LegendLine><Big>自定义策略下 你实际选择使用的</Big><Big $light>节点/策略</Big></LegendLine></LegendRow>
        <LegendRow $gap={24} $pad={31} $c={V}><LegendLine><Big>分流规则</Big><Small $ml={-6} $size={37.3}>（可长按按钮可进入资源列表（分流）进行编辑；也可以单击添加单个分流规则）</Small></LegendLine></LegendRow>
        <LegendRow $gap={22} $pad={31} $c={N}><LegendLine><Big>新建自定义策略</Big></LegendLine></LegendRow>
        <LegendRow $gap={21} $pad={20} $c={P}><LegendLine><Big>重写规则</Big><Small $ml={5} $size={37.5}>（可长按进入资源列表（重写）进行编辑；也可以单击添加/更多选项以禁用/启用/更新脚本）</Small></LegendLine></LegendRow>
        <LegendRow $gap={20} $pad={20} $c={M}><LegendLine><Big>速度</Big><Small $ml={5} $size={37}>（查看节点在本次软件开启过程中达到的最快速度）</Small></LegendLine></LegendRow>
        <LegendRow $gap={21} $pad={0} $c={B}><LegendLine><Big>设置按钮</Big><Small $ml={24} $size={37}><i>（单击可进入软件</i>二级设置页面<i>，长按可直接</i>设置运行模式<i>（规则分流/全部代理/全部直连））</i></Small></LegendLine></LegendRow>
        <LegendRow $gap={87} $pad={0} $c={R}><LegendLine><Big>长按自定义策略图标或名称</Big><Small $ml={25} $size={37.5}>可进行 编辑/图标/背景/删除设置</Small></LegendLine></LegendRow>
      </Legend>

      <Overlay viewBox="0 0 3878 1792" fill="none" strokeWidth="5">
        <rect x="658" y="1320" width="217" height="16" fill="#fff" stroke="none" />
        {lines.map(([c, pts], i) => <polyline key={i} points={pts} stroke={c} />)}
        {boxes.map(([c, x1, y1, x2, y2], i) => (
          <rect key={i} x={x1 + 2.5} y={y1 + 2.5} width={x2 - x1 - 5} height={y2 - y1 - 5} stroke={c} />
        ))}
        <ellipse cx="836.5" cy="1676" rx="69" ry="70" stroke={B} />
      </Overlay>

      <Note $x={489} $y={643} $c={B} $size={36}>流量条</Note>
      <Note $x={702} $y={724} $c={O} $size={36.5}>可食用节点数</Note>
      <Note $x={523} $y={871} $c={R}>点击<b>图标</b>以测试节点可用性</Note>
      <Note $x={372} $y={1120} $c={R}>TCP建连时间</Note>
      <Note $x={374} $y={1232} $c={R}>节点可用性测试</Note>
      <Note $x={372} $y={1276} $c={R}>连接耗时（通过节点访问测试链接）</Note>
    </Canvas>
  );
}
